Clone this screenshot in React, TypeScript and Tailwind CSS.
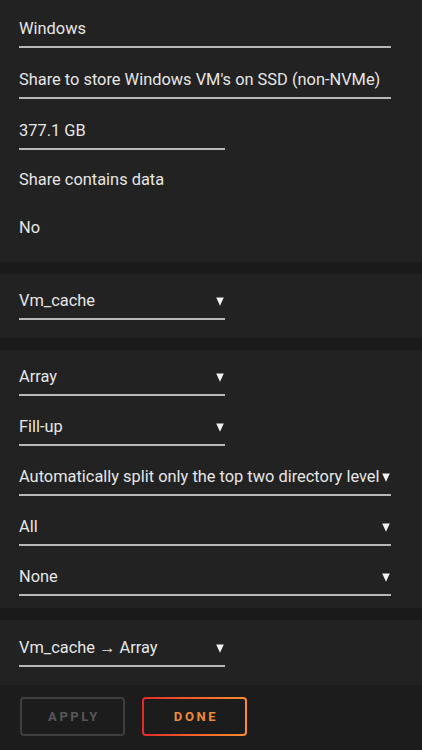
import React from "react";

const Caret = () => (
  <svg width="8" height="9" viewBox="0 0 8 9" className="shrink-0">
    <path d="M0.2 0.5 H7.8 L4 8.8 Z" fill="#f2f2f2" />
  </svg>
);

type FieldProps = { text: string; short?: boolean; select?: boolean };

const Field = ({ text, short, select }: FieldProps) => (
  <div
    className={`flex items-center h-[29px] pb-[7px] border-b-2 border-[#b8b8b8] pr-[1px] ${
      short ? "w-[206px]" : "w-[372px]"
    }`}
  >
    <span className="flex-1 min-w-0 whitespace-nowrap leading-[20px] text-[16.4px] text-[#e6e6e6]">
      {text}
    </span>
    {select && <Caret />}
  </div>
);

const Label = ({ text }: { text: string }) => (
  <div className="leading-[20px] h-[20px] text-[16.4px] text-[#e6e6e6] whitespace-nowrap">{text}</div>
);

export default function App() {
  return (
    <div
      className="w-[422px] h-[750px] bg-[#1a1a1a] flex flex-col gap-[12px] overflow-hidden"
      style={{ fontFamily: "Roboto, 'Noto Sans', sans-serif" }}
    >
      <div className="bg-[#222222] pl-[19px] pt-[19px] pb-[24px] flex flex-col">
        <div className="flex flex-col gap-[22px]">
          <Field text="Windows" />
          <Field text="Share to store Windows VM's on SSD (non-NVMe)" />
          <Field text="377.1 GB" short />
        </div>
        <div className="mt-[20px]">
          <Label text="Share contains data" />
        </div>
        <div className="mt-[28px]">
          <Label text="No" />
        </div>
      </div>

      <div className="bg-[#222222] pl-[19px] pt-[17px] pb-[18px]">
        <Field text="Vm_cache" short select />
      </div>

      <div className="bg-[#222222] pl-[19px] pt-[17px] pb-[12px] flex flex-col gap-[21px]">
        <Field text="Array" short select />
        <Field text="Fill-up" short select />
        <Field text="Automatically split only the top two directory level" select />
        <Field text="All" select />
        <Field text="None" select />
      </div>

      <div className="flex flex-col">
        <div className="bg-[#222222] pl-[19px] pt-[18px] pb-[18px]">
          <Field text="Vm_cache → Array" short select />
        </div>
        <div className="bg-[#1c1c1c] pl-[20px] pt-[12px] pb-[14px] flex gap-[17px]">
          <div className="w-[105px] h-[39px] rounded-[4px] border-2 border-[#3e3e3e] flex items-center justify-center">
            <span className="text-[13px] font-bold tracking-[2.6px] pl-[3px] text-[#585858]">APPLY</span>
          </div>
          <div className="w-[105px] h-[39px] rounded-[4px] p-[2px] bg-gradient-to-r from-[#e22828] to-[#ff8c2f]">
            <div className="w-full h-full rounded-[2px] bg-[#1c1c1c] flex items-center justify-center">
              <span className="text-[13px] font-bold tracking-[2.6px] pl-[3px] text-[#f08a38]">DONE</span>
            </div>
          </div>
        </div>
      </div>
    </div>
  );
}
